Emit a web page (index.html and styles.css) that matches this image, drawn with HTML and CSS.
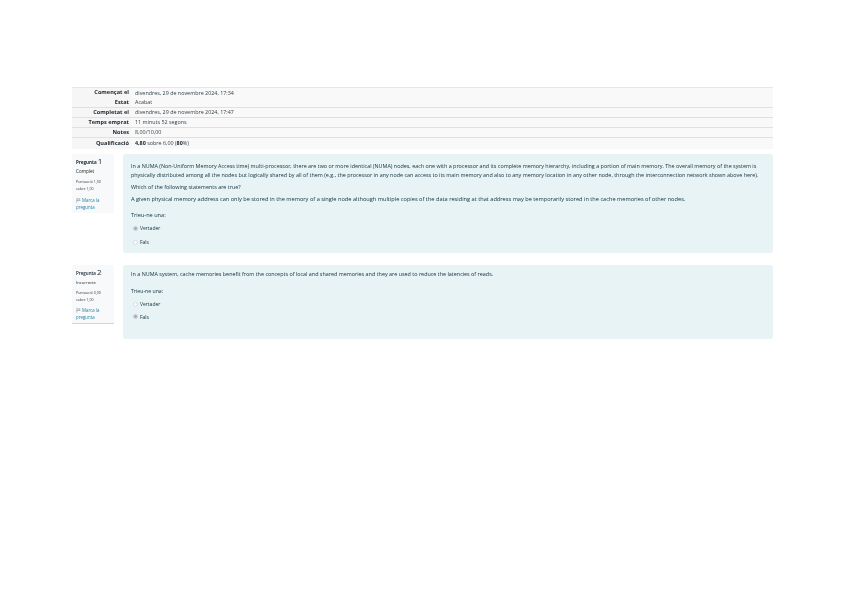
FILE: index.html
```html
<!DOCTYPE html>
<html lang="ca">
<head>
<meta charset="utf-8">
<title>Revisió</title>
<link rel="stylesheet" href="styles.css">
</head>
<body>
<main class="page">
<table class="summary">
<tbody>
<tr class="first"><th>Començat el</th><td>divendres, 29 de novembre 2024, 17:34</td></tr>
<tr class="nob"><th>Estat</th><td>Acabat</td></tr>
<tr><th>Completat el</th><td>divendres, 29 de novembre 2024, 17:47</td></tr>
<tr><th>Temps emprat</th><td>11 minuts 52 segons</td></tr>
<tr><th>Notes</th><td>8,00/10,00</td></tr>
<tr class="last"><th>Qualificació</th><td><b>4,80</b> sobre 6,00 (<b>80</b>%)</td></tr>
</tbody>
</table>

<section class="question q1">
<aside class="info">
<h3 class="qno">Pregunta <span>1</span></h3>
<div class="state">Complet</div>
<div class="grade">Puntuació 1,00 sobre 1,00</div>
<div class="flag"><svg class="flagicon" viewBox="0 0 6 6"><path d="M1 0.5v5M1 1h4l-1 1 1 1H1" fill="none" stroke="#8a9299" stroke-width=".7"/></svg><a>Marca la pregunta</a></div>
</aside>
<div class="content">
<p class="qt">In a NUMA (Non-Uniform Memory Access time) multi-processor, there are two or more identical (NUMA) nodes, each one with a processor and its complete memory hierarchy, including a portion of main memory. The overall memory of the system is physically distributed among all the nodes but logically shared by all of them (e.g., the processor in any node can access to its main memory and also to any memory location in any other node, through the interconnection network shown above here).</p>
<p class="qt which">Which of the following statements are true?</p>
<p class="claim">A given physical memory address can only be stored in the memory of a single node although multiple copies of the data residing at that address may be temporarily stored in the cache memories of other nodes.</p>
<p class="prompt">Trieu-ne una:</p>
<div class="opt"><span class="radio on"></span>Vertader</div>
<div class="opt"><span class="radio"></span>Fals</div>
</div>
</section>

<section class="question q2">
<aside class="info ruled">
<h3 class="qno">Pregunta <span>2</span></h3>
<div class="state">Incorrecte</div>
<div class="grade">Puntuació 0,00 sobre 1,00</div>
<div class="flag"><svg class="flagicon" viewBox="0 0 6 6"><path d="M1 0.5v5M1 1h4l-1 1 1 1H1" fill="none" stroke="#8a9299" stroke-width=".7"/></svg><a>Marca la pregunta</a></div>
</aside>
<div class="content">
<p class="qt">In a NUMA system, cache memories benefit from the concepts of local and shared memories and they are used to reduce the latencies of reads.</p>
<p class="prompt small">Trieu-ne una:</p>
<div class="opt tight"><span class="radio"></span>Vertader</div>
<div class="opt tight"><span class="radio on"></span>Fals</div>
</div>
</section>
</main>
</body>
</html>
```

FILE: styles.css
```css
* { box-sizing: border-box; }
html, body { margin: 0; padding: 0; background: #fff; }
body {
  font-family: "Open Sans", "Liberation Sans", sans-serif;
  font-size: 5.6px;
  color: #1f2d35;
  line-height: 1.3;
}
.page { padding: 87px 75px 0 72px; width: 848px; filter: blur(.3px); }
p { margin: 0; }

.summary {
  width: 100%;
  border-collapse: collapse;
  background: #f9f9f9;
  border-top: 1px solid #e6e6e6;
  margin-bottom: 5px;
}
.summary th, .summary td {
  height: 10px;
  padding: 1px 2px 0;
  font-size: 5.6px;
  line-height: 1;
  border-top: 1px solid #e0e0e0;
  vertical-align: middle;
}
.summary tr.first th, .summary tr.first td,
.summary tr.nob th, .summary tr.nob td { border-top: 0; }
.summary tr.last th, .summary tr.last td { height: 11px; }
.summary th {
  width: 59px;
  text-align: right;
  font-weight: 700;
  color: #222c33;
  background: #f6f6f6;
}
.summary td { padding-left: 4px; font-size: 5.4px; color: #2f3e47; }
.summary b { color: #16242c; }

.question { display: flex; align-items: flex-start; gap: 9px; }
.q1 { margin-bottom: 12px; }

.info {
  width: 42px;
  height: 59px;
  background: #f8f9fa;
  padding: 2px 4px 0;
  flex: none;
}
.info.ruled { border-bottom: 1px solid #cfd6da; }
.qno { margin: 0 0 1px; font-size: 4.5px; font-weight: 700; line-height: 9px; color: #16242c; }
.qno span { font-size: 8px; font-weight: 400; }
.q2 .qno { font-weight: 600; }
.state { font-size: 4.6px; line-height: 7px; margin-bottom: 3px; color: #1a1a1a; }
.q2 .state { font-size: 4.2px; }
.grade { font-size: 3.6px; line-height: 7px; color: #3a3a3a; margin-bottom: 5px; width: 33px; }
.q2 .grade { margin-bottom: 4px; }
.flag { font-size: 4.4px; line-height: 7px; color: #1d7fa8; width: 34px; }
.flagicon { width: 5px; height: 5px; margin-right: 1px; vertical-align: -1px; }

.content {
  flex: 1;
  background: #e7f3f5;
  border-radius: 3px;
  padding: 8px 8px 0;
  color: #12303e;
}
.q1 .content { height: 99px; }
.q2 .content { height: 74px; padding-top: 5px; }
.qt { font-size: 5.41px; line-height: 9.5px; }
.which { margin-top: 2px; }
.claim { font-size: 5.65px; line-height: 9px; margin-top: 3px; margin-bottom: 7px; }
.prompt { font-size: 5.6px; line-height: 9px; margin-bottom: 1px; }
.prompt.small { font-size: 5.2px; margin-top: 8px; margin-bottom: 2px; }
.opt { display: flex; align-items: center; gap: 2px; font-size: 5px; height: 14px; padding-left: 2px; }
.opt.tight { height: 12.5px; }
.radio {
  width: 5px; height: 5px;
  border-radius: 50%;
  background: #fff;
  border: 1px solid #d5dcdf;
  flex: none;
}
.radio.on { background: #a9b2b6; border-color: #cdd4d7; }
```
